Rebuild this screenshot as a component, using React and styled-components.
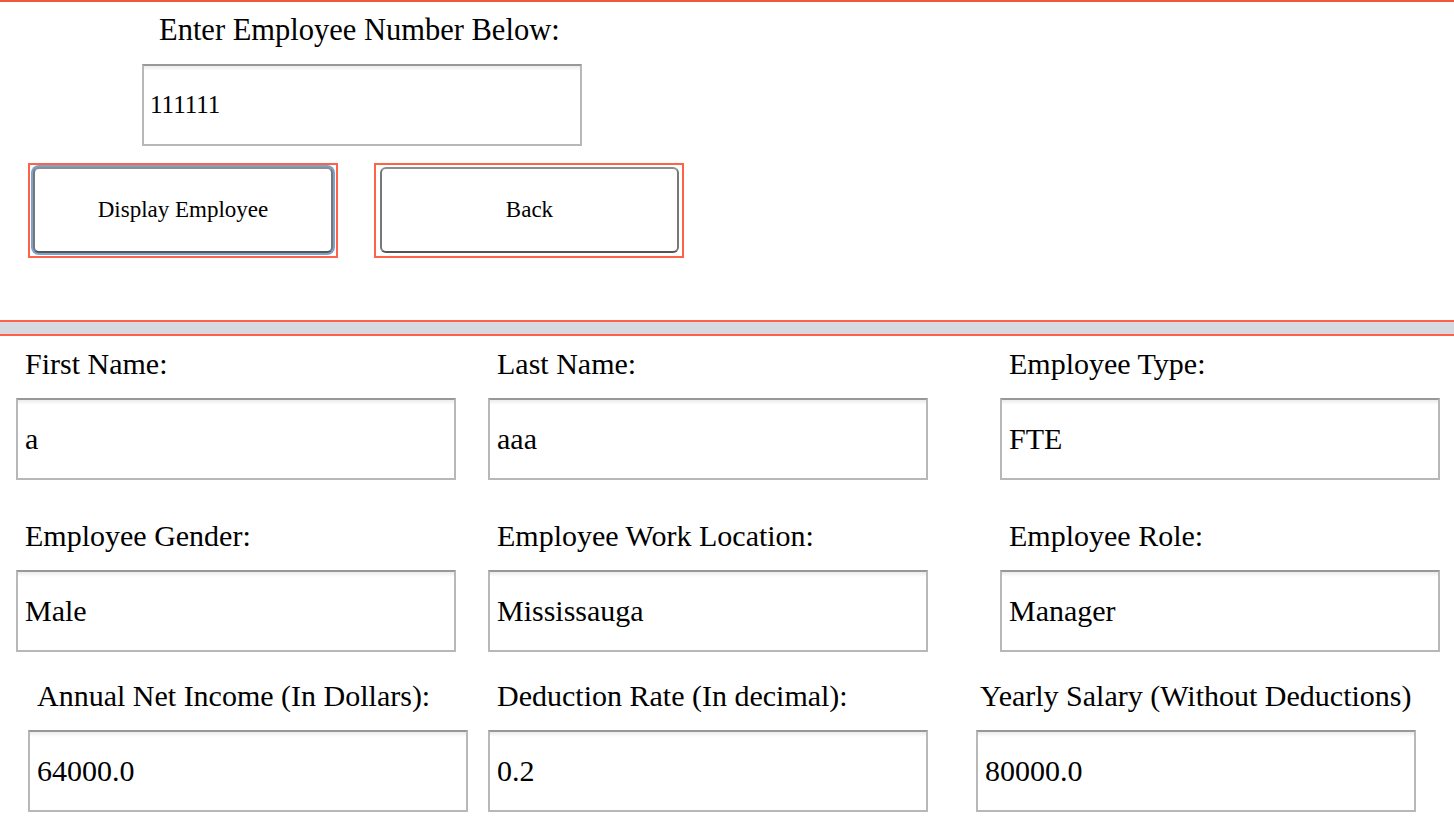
import React from 'react';
import styled, { createGlobalStyle } from 'styled-components';

const GlobalStyle = createGlobalStyle`
  html, body {
    margin: 0;
    padding: 0;
    background: #ffffff;
  }
  body {
    font-family: "Liberation Serif", "DejaVu Serif", serif;
    color: #000;
    overflow: hidden;
  }
`;

const Page = styled.div`
  width: 1454px;
  height: 828px;
  border-top: 2px solid #f0583c;
  box-sizing: border-box;
`;

const SearchPanel = styled.section`
  display: flex;
  flex-direction: column;
  align-items: flex-start;
  padding-top: 12px;
  height: 318px;
  box-sizing: border-box;
`;

const Title = styled.div`
  margin-left: 159px;
  font-size: 30.5px;
  line-height: 32px;
`;

const TextBox = styled.div`
  box-sizing: border-box;
  width: 440px;
  height: 82px;
  margin-left: ${p => p.$ml || 0}px;
  display: flex;
  align-items: center;
  padding-left: ${p => p.$pad || 7}px;
  border: 2px solid #b8b8b8;
  border-top-color: #989898;
  background: linear-gradient(to bottom, #ececec 0px, #ffffff 5px);
  font-size: ${p => p.$size || 30}px;
  white-space: nowrap;
`;

const NumberBox = styled(TextBox)`
  margin-top: 18px;
`;

const ButtonRow = styled.div`
  display: flex;
  gap: 36px;
  margin-top: 17px;
  margin-left: 28px;
`;

const ButtonFrame = styled.div`
  box-sizing: border-box;
  width: 310px;
  height: 95px;
  border: 2px solid #ff6347;
  padding: 1px 2px 2px 2px;
  display: flex;
`;

const ActionButton = styled.button`
  flex: 1;
  box-sizing: border-box;
  margin: ${p => (p.$focused ? '1px' : '1px 1px 1px 2px')};
  border-radius: 6px;
  border: 2px solid #8e8e8e;
  border-bottom-color: #555;
  border-left-color: #777;
  border-right-color: #777;
  background: #ffffff;
  box-shadow: ${p => (p.$focused ? '0 0 0 2px #7aa3cf' : 'none')};
  font-family: "Liberation Serif", "DejaVu Serif", serif;
  font-size: 23px;
  color: #000;
  padding: 0;
  cursor: pointer;
`;

const Divider = styled.div`
  height: 12px;
  background: #d6d9e0;
  border-top: 2px solid #ff6347;
  border-bottom: 2px solid #ff6347;
`;

const DetailsPanel = styled.section`
  display: flex;
  flex-direction: column;
  padding-top: 12px;
`;

const FieldRow = styled.div`
  display: flex;
  margin-top: ${p => p.$mt || 0}px;
`;

const Field = styled.div`
  display: flex;
  flex-direction: column;
  width: 440px;
  margin-left: ${p => p.$ml}px;
`;

const FieldLabel = styled.div`
  font-size: 30px;
  line-height: 32px;
  height: 32px;
  margin-bottom: 18px;
  padding-left: ${p => p.$indent || 9}px;
  white-space: nowrap;
`;

const rows = [
  {
    mt: 0,
    fields: [
      { label: 'First Name:', value: 'a', ml: 16 },
      { label: 'Last Name:', value: 'aaa', ml: 32 },
      { label: 'Employee Type:', value: 'FTE', ml: 72 },
    ],
  },
  {
    mt: 40,
    fields: [
      { label: 'Employee Gender:', value: 'Male', ml: 16 },
      { label: 'Employee Work Location:', value: 'Mississauga', ml: 32 },
      { label: 'Employee Role:', value: 'Manager', ml: 72 },
    ],
  },
  {
    mt: 28,
    fields: [
      { label: 'Annual Net Income (In Dollars):', value: '64000.0', ml: 28 },
      { label: 'Deduction Rate (In decimal):', value: '0.2', ml: 20 },
      { label: 'Yearly Salary (Without Deductions)', value: '80000.0', ml: 48, indent: 4 },
    ],
  },
];

export default function App() {
  return (
    <>
      <GlobalStyle />
      <Page>
        <SearchPanel>
          <Title>Enter Employee Number Below:</Title>
          <NumberBox $ml={142} $pad={6} $size={25}>111111</NumberBox>
          <ButtonRow>
            <ButtonFrame>
              <ActionButton $focused>Display Employee</ActionButton>
            </ButtonFrame>
            <ButtonFrame>
              <ActionButton>Back</ActionButton>
            </ButtonFrame>
          </ButtonRow>
        </SearchPanel>
        <Divider />
        <DetailsPanel>
          {rows.map((row, i) => (
            <FieldRow key={i} $mt={row.mt}>
              {row.fields.map(f => (
                <Field key={f.label} $ml={f.ml}>
                  <FieldLabel $indent={f.indent}>{f.label}</FieldLabel>
                  <TextBox>{f.value}</TextBox>
                </Field>
              ))}
            </FieldRow>
          ))}
        </DetailsPanel>
      </Page>
    </>
  );
}
